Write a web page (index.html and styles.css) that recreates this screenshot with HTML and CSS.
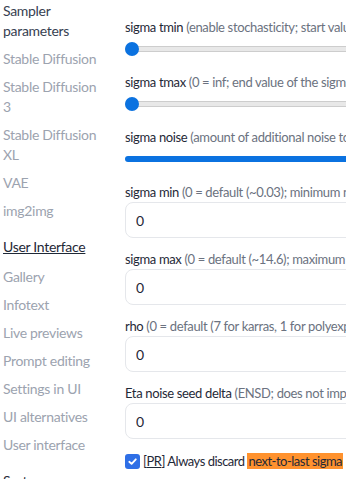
FILE: index.html
```html
<!DOCTYPE html>
<html lang="en">
<head>
    <meta charset="UTF-8">
    <meta name="viewport" content="width=device-width, initial-scale=1.0">
    <title>Settings</title>
    <link rel="stylesheet" href="styles.css">
</head>
<body>
    <div class="settings">
        <nav class="sections">
            <a class="section current" href="#">Sampler parameters</a>
            <a class="section" href="#">Stable Diffusion</a>
            <a class="section" href="#">Stable Diffusion 3</a>
            <a class="section" href="#">Stable Diffusion XL</a>
            <a class="section" href="#">VAE</a>
            <a class="section" href="#">img2img</a>
            <div class="group">User Interface</div>
            <a class="section" href="#">Gallery</a>
            <a class="section" href="#">Infotext</a>
            <a class="section" href="#">Live previews</a>
            <a class="section" href="#">Prompt editing</a>
            <a class="section" href="#">Settings in UI</a>
            <a class="section" href="#">UI alternatives</a>
            <a class="section" href="#">User interface</a>
            <div class="group">System</div>
        </nav>

        <main class="options">
            <div class="setting slider-setting">
                <label class="label">sigma tmin <span class="info">(enable stochasticity; start value of the sigma range; if min&lt;sigma&lt;max, then stochasticity is added)</span></label>
                <input type="range" class="range" min="0" max="10" step="0.01" value="0">
            </div>
            <div class="setting slider-setting">
                <label class="label">sigma tmax <span class="info">(0 = inf; end value of the sigma range; if min&lt;sigma&lt;max, then stochasticity is added)</span></label>
                <input type="range" class="range" min="0" max="999" step="0.01" value="0">
            </div>
            <div class="setting slider-setting">
                <label class="label">sigma noise <span class="info">(amount of additional noise to counteract loss of detail during sampling)</span></label>
                <input type="range" class="range filled" min="0" max="1" step="0.01" value="1">
            </div>

            <div class="setting input-setting">
                <label class="label">sigma min <span class="info">(0 = default (~0.03); minimum noise strength for k-diffusion noise scheduler)</span></label>
                <input type="number" class="field" value="0">
            </div>
            <div class="setting input-setting">
                <label class="label">sigma max <span class="info">(0 = default (~14.6); maximum noise strength for k-diffusion noise scheduler)</span></label>
                <input type="number" class="field" value="0">
            </div>
            <div class="setting input-setting">
                <label class="label">rho <span class="info">(0 = default (7 for karras, 1 for polyexponential); higher values result in a steeper noise schedule)</span></label>
                <input type="number" class="field" value="0">
            </div>
            <div class="setting input-setting">
                <label class="label">Eta noise seed delta <span class="info">(ENSD; does not improve anything, just produces different results for ancestral samplers)</span></label>
                <input type="number" class="field" value="0">
            </div>

            <label class="check-row">
                <span class="checkbox">
                    <svg width="11" height="11" viewBox="0 0 12 12"><path d="M2.5 6.3 5 8.6 9.6 3.6" fill="none" stroke="#fff" stroke-width="2" stroke-linecap="round" stroke-linejoin="round"/></svg>
                </span>
                <span class="check-text">[<abbr class="pr">PR</abbr>] Always discard <mark class="hl">next-to-last sigma</mark> of the schedule</span>
            </label>
        </main>
    </div>
</body>
</html>
```

FILE: styles.css
```css
body {
    margin: 0;
    padding: 0;
    background: #ffffff;
    font-family: Lato, "Liberation Sans", sans-serif;
    font-size: 14px;
    overflow: hidden;
}

.settings {
    display: flex;
    width: 1000px;
}

.sections {
    display: flex;
    flex-direction: column;
    flex-shrink: 0;
    width: 100px;
    padding-left: 3px;
    margin-top: -3px;
    letter-spacing: -0.3px;
}

.section {
    padding: 4px 0;
    line-height: 20px;
    color: #9ca3af;
    text-decoration: none;
}

.section.current {
    color: #374151;
}

.group {
    margin-top: 12px;
    padding-bottom: 6px;
    line-height: 20px;
    color: #1f2937;
    text-decoration: underline;
}

.options {
    display: flex;
    flex-direction: column;
    flex: 1;
    margin-left: 22px;
    padding-top: 17px;
    font-size: 13px;
    letter-spacing: -0.35px;
}

.setting {
    display: flex;
    flex-direction: column;
}

.label {
    line-height: 20px;
    color: #1f2937;
    white-space: nowrap;
}

.info {
    color: #6b7280;
}

/* sliders */
.slider-setting {
    margin-bottom: 16px;
}

.range {
    -webkit-appearance: none;
    appearance: none;
    width: 760px;
    height: 14px;
    margin: 5px 0 0;
    background: transparent;
}

.range::-webkit-slider-runnable-track {
    height: 6px;
    border-radius: 3px;
    background: #e8e8e8;
    box-shadow: inset 0 0 0 1px #cdcdcd;
}

.range::-webkit-slider-thumb {
    -webkit-appearance: none;
    width: 14px;
    height: 14px;
    margin-top: -4px;
    border-radius: 50%;
    background: #0b72e0;
    border: none;
}

.range.filled::-webkit-slider-runnable-track {
    background: #0b72e0;
    box-shadow: none;
}

/* number inputs */
.input-setting {
    margin-bottom: 11px;
}

.field {
    box-sizing: border-box;
    width: 760px;
    height: 36px;
    margin: 0;
    padding: 0 10px;
    border: 1px solid #e5e7eb;
    border-radius: 8px;
    background: #ffffff;
    font: 14px Lato, "Liberation Sans", sans-serif;
    color: #1f2937;
    outline: none;
}

.field::-webkit-inner-spin-button {
    -webkit-appearance: none;
}

/* checkbox */
.check-row {
    display: flex;
    align-items: center;
    gap: 3px;
    margin-top: 1px;
    line-height: 20px;
    color: #1f2937;
    white-space: nowrap;
    letter-spacing: -0.5px;
}

.checkbox {
    display: flex;
    align-items: center;
    justify-content: center;
    flex-shrink: 0;
    width: 15px;
    height: 15px;
    border-radius: 3px;
    background: #2f6fe6;
}

.pr {
    text-decoration: underline;
}

.hl {
    background: #ff922e;
    color: #1f2937;
    padding: 0 1px;
}
```
